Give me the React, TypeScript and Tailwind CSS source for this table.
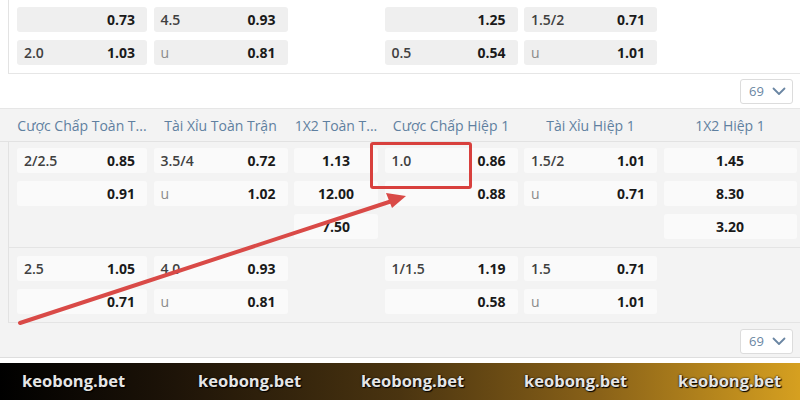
import React from "react";

type Cell =
  | { kind: "pair"; label: string; odd: string }
  | { kind: "center"; odd: string }
  | { kind: "none" };

const P = (label: string, odd: string): Cell => ({ kind: "pair", label, odd });
const C = (odd: string): Cell => ({ kind: "center", odd });
const N: Cell = { kind: "none" };

const COLS = "grid grid-cols-[130px_134px_84px_133px_133px_133px] gap-x-[6.5px]";

function CellView({ cell, tone }: { cell: Cell; tone: "grey" | "white" }) {
  const bg = tone === "grey" ? "bg-[#efefef]" : "bg-[#fafafa]";
  if (cell.kind === "none") return <div className="h-[25px]" />;
  if (cell.kind === "center")
    return (
      <div className={`h-[25px] rounded-[3px] ${bg} flex items-center justify-center text-[14px] font-bold text-[#1a1a1a]`}>
        {cell.odd}
      </div>
    );
  const isU = cell.label === "u";
  return (
    <div className={`h-[25px] rounded-[3px] ${bg} flex items-center justify-between pl-[7px] pr-[12px] text-[14px]`}>
      <span className={isU ? "text-[#8a8a8a] font-normal" : "text-[#404040] font-semibold"}>{cell.label}</span>
      <span className="font-bold text-[#1a1a1a]">{cell.odd}</span>
    </div>
  );
}

function Rows({ rows, tone }: { rows: Cell[][]; tone: "grey" | "white" }) {
  return (
    <div className="flex flex-col gap-y-[8px]">
      {rows.map((r, i) => (
        <div key={i} className={COLS}>
          {r.map((c, j) => (
            <CellView key={j} cell={c} tone={tone} />
          ))}
        </div>
      ))}
    </div>
  );
}

function Dropdown() {
  return (
    <div className="w-[53px] h-[25px] bg-white border border-[#dcdcdc] rounded-[3px] flex items-center justify-between pl-[8px] pr-[6px]">
      <span className="text-[13px] text-[#6a86a3]">69</span>
      <svg width="14" height="9" viewBox="0 0 14 9" fill="none">
        <path d="M1.5 1.5 L7 7 L12.5 1.5" stroke="#6a86a3" strokeWidth="1.8" strokeLinecap="round" strokeLinejoin="round" />
      </svg>
    </div>
  );
}

const headers = [
  "Cược Chấp Toàn T...",
  "Tài Xỉu Toàn Trận",
  "1X2 Toàn T...",
  "Cược Chấp Hiệp 1",
  "Tài Xỉu Hiệp 1",
  "1X2 Hiệp 1",
];

export default function App() {
  const top: Cell[][] = [
    [P("", "0.73"), P("4.5", "0.93"), N, P("", "1.25"), P("1.5/2", "0.71"), N],
    [P("2.0", "1.03"), P("u", "0.81"), N, P("0.5", "0.54"), P("u", "1.01"), N],
  ];
  const g1: Cell[][] = [
    [P("2/2.5", "0.85"), P("3.5/4", "0.72"), C("1.13"), P("1.0", "0.86"), P("1.5/2", "1.01"), C("1.45")],
    [P("", "0.91"), P("u", "1.02"), C("12.00"), P("", "0.88"), P("u", "0.71"), C("8.30")],
    [N, N, C("7.50"), N, N, C("3.20")],
  ];
  const g2: Cell[][] = [
    [P("2.5", "1.05"), P("4.0", "0.93"), N, P("1/1.5", "1.19"), P("1.5", "0.71"), N],
    [P("", "0.71"), P("u", "0.81"), N, P("", "0.58"), P("u", "1.01"), N],
  ];

  return (
    <div
      className="relative w-[800px] h-[400px] overflow-hidden bg-white flex flex-col"
      style={{ fontFamily: '"Open Sans", "Noto Sans", sans-serif' }}
    >
      {/* Section 1 */}
      <div className="h-[74px] shrink-0 ml-[8px] border-l border-[#e3e3e3] pl-[8px] pt-[7px] border-b border-b-[#e6e6e6]">
        <Rows rows={top} tone="grey" />
      </div>
      <div className="h-[34px] shrink-0 flex items-start justify-end pt-[5px] pr-[7px]">
        <Dropdown />
      </div>

      {/* Section 2 */}
      <div className="bg-[#f3f3f3] border-t border-[#e6e6e6] shrink-0">
        <div className={`h-[33px] pl-[17px] items-center border-b border-[#e2e2e2] ${COLS}`}>
          {headers.map((h, i) => (
            <div key={i} className="whitespace-nowrap text-center text-[14px] text-[#5f80a0]">
              {h}
            </div>
          ))}
        </div>
        <div className="h-[106px] ml-[8px] border-l border-[#e2e2e2] pl-[8px] pt-[6px] border-b border-b-[#e4e4e4]">
          <Rows rows={g1} tone="white" />
        </div>
        <div className="h-[75px] ml-[8px] border-l border-[#e2e2e2] pl-[8px] pt-[8px] border-b border-b-[#e4e4e4]">
          <Rows rows={g2} tone="white" />
        </div>
        <div className="h-[35px] flex items-start pt-[6px] justify-end pr-[7px] border-b border-[#dedede]">
          <Dropdown />
        </div>
      </div>
      <div className="flex-1 bg-white" />

      {/* Banner */}
      <div className="h-[37px] shrink-0 bg-[linear-gradient(90deg,#000000_0%,#1e1408_22%,#4a3410_50%,#8a6218_75%,#d6a020_100%)] flex items-center pl-[22px]">
        <div className="flex items-center w-full text-[16.5px] font-bold text-[#e6e6e6] [text-shadow:0_0_2px_#000,1px_1px_1px_#000]">
          <span className="w-[176px]">keobong.bet</span>
          <span className="w-[163px]">keobong.bet</span>
          <span className="w-[163px]">keobong.bet</span>
          <span className="w-[154px]">keobong.bet</span>
          <span>keobong.bet</span>
        </div>
      </div>

      {/* Annotations */}
      <div className="absolute left-[370px] top-[142px] w-[102px] h-[47px] border-[3px] border-[#d8403d] rounded-[3px]" />
      <svg className="absolute left-0 top-0" width="800" height="400" viewBox="0 0 800 400">
        <line x1="20" y1="323" x2="392" y2="201" stroke="#d94a47" strokeWidth="4" strokeLinecap="round" />
        <polygon points="406,196 386,193 392,208" fill="#d94a47" />
      </svg>
    </div>
  );
}
